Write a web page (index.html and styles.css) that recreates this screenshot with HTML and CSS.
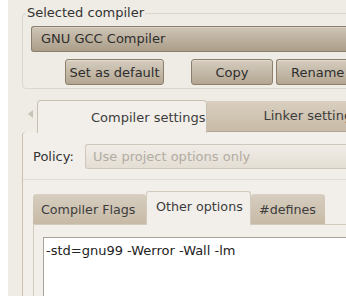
FILE: index.html
```html
<!DOCTYPE html>
<html lang="en">
<head>
    <meta charset="UTF-8">
    <title>Compiler settings</title>
    <link rel="stylesheet" href="styles.css">
</head>
<body>
    <div class="side"></div>
    <div class="main">
        <fieldset class="frame">
            <legend>Selected compiler</legend>
            <div class="combo">GNU GCC Compiler</div>
            <div class="buttons">
                <button class="btn btn-default">Set as default</button>
                <button class="btn btn-copy">Copy</button>
                <button class="btn btn-rename">Rename</button>
            </div>
        </fieldset>

        <div class="tabs">
            <span class="arrow"></span>
            <div class="tab active tab-compiler">Compiler settings</div>
            <div class="tab tab-linker">Linker settings</div>
        </div>
        <div class="panel">
            <div class="policy">
                <label>Policy:</label>
                <div class="combo disabled">Use project options only</div>
            </div>
            <div class="sep"></div>
            <div class="subtabs">
                <div class="subtab">Compiler Flags</div>
                <div class="subtab active">Other options</div>
                <div class="subtab">#defines</div>
            </div>
            <div class="subpanel">
                <div class="editor">-std=gnu99 -Werror -Wall -lm</div>
            </div>
        </div>
    </div>
</body>
</html>
```

FILE: styles.css
```css
body {
    margin: 0;
    display: flex;
    height: 296px;
    overflow: hidden;
    font-family: "DejaVu Sans", sans-serif;
    font-size: 12px;
    color: #3c3c3c;
    background-color: #fff;
}
.side {
    width: 8px;
    flex: none;
    background-color: #fff;
}
.main {
    flex: 1;
    background-color: #efebe5;
    padding-left: 14px;
    overflow: hidden;
}
.frame {
    margin: 5px -20px 0 0;
    padding: 5px 0 3px 8px;
    border: 1px solid #dcd6cd;
    border-radius: 4px;
}
.frame legend {
    padding: 0 1px;
    margin-left: -5px;
    font-size: 13px;
    line-height: 16px;
    color: #333;
}
.combo {
    height: 24px;
    line-height: 24px;
    padding-left: 9px;
    border: 1px solid #8c7f6c;
    border-right: none;
    border-radius: 3px 0 0 3px;
    background: linear-gradient(#cfc5b6, #ab9e89);
    color: #2e2e2e;
    font-size: 13px;
    box-shadow: inset 0 1px 0 rgba(255,255,255,0.25);
}
.buttons {
    display: flex;
    margin-top: 7px;
    padding-left: 34px;
}
.btn {
    height: 26px;
    border: 1px solid #8c7f6c;
    border-radius: 3px;
    background: linear-gradient(#d6cdc0, #b3a691);
    font-family: inherit;
    font-size: 13px;
    color: #2e2e2e;
    padding: 0;
    box-shadow: inset 0 1px 0 rgba(255,255,255,0.3);
}
.btn-default {
    width: 99px;
}
.btn-copy {
    width: 82px;
    margin-left: 27px;
}
.btn-rename {
    width: 90px;
    margin-left: 3px;
    border-right: none;
    border-radius: 3px 0 0 3px;
    text-align: left;
    padding-left: 14px;
}
.tabs {
    display: flex;
    align-items: flex-end;
    margin-top: 10px;
    height: 33px;
}
.arrow {
    width: 0;
    height: 0;
    border-top: 4px solid transparent;
    border-bottom: 4px solid transparent;
    border-right: 5px solid #c8c1b6;
    margin: 0 4px 14px 6px;
}
.tab {
    font-size: 13px;
    white-space: nowrap;
}
.tab-compiler {
    width: 176px;
    height: 33px;
    line-height: 33px;
    box-sizing: border-box;
    padding-left: 53px;
    border: 1px solid #c9c0b2;
    border-bottom: none;
    border-radius: 4px 4px 0 0;
    background-color: #f2efea;
    margin-bottom: -1px;
}
.tab-linker {
    flex: 1;
    height: 30px;
    line-height: 30px;
    padding-left: 57px;
    background: linear-gradient(#d9cfc0, #c8bba7);
    border-bottom: 1px solid #b1a593;
}
.panel {
    border-left: 1px solid #c9c0b2;
    border-radius: 4px 0 0 0;
    background-color: #f2efea;
    height: 200px;
    padding-left: 10px;
}
.policy {
    display: flex;
    align-items: center;
    padding-top: 12px;
}
.policy label {
    font-size: 13px;
    width: 52px;
    color: #333;
}
.combo.disabled {
    flex: 1;
    height: 23px;
    line-height: 23px;
    padding-left: 7px;
    border-color: #cfc7bb;
    background: linear-gradient(#f0ece6, #e4ded4);
    color: #b2aca3;
    box-shadow: none;
}
.sep {
    height: 1px;
    background-color: #e2ddd5;
    margin: 10px 0 0 -10px;
}
.subtabs {
    display: flex;
    align-items: flex-end;
    margin-top: 11px;
    height: 33px;
}
.subtab {
    height: 30px;
    line-height: 30px;
    font-size: 12.7px;
    white-space: nowrap;
    padding: 0 8px;
    background: linear-gradient(#d6cdbf, #c7baa6);
    border-top: 1px solid #d9d1c5;
    border-radius: 3px 3px 0 0;
    box-sizing: border-box;
}
.subtab:first-child {
    width: 113px;
}
.subtab.active {
    width: 105px;
    height: 34px;
    line-height: 29px;
    padding-left: 9px;
    background: #f2efea;
    border: 1px solid #d2cabd;
    border-bottom: none;
    margin-bottom: -1px;
}
.subtab:last-child {
    width: 74px;
}
.subpanel {
    border-left: 1px solid #d2cabd;
    border-top: 1px solid #d2cabd;
    padding: 12px 0 0 9px;
    height: 80px;
}
.editor {
    background-color: #fff;
    border: 1px solid #a9a39a;
    border-right: none;
    height: 70px;
    padding: 5px 0 0 2px;
    font-family: "DejaVu Sans", sans-serif;
    font-size: 13px;
    color: #222;
}
```
